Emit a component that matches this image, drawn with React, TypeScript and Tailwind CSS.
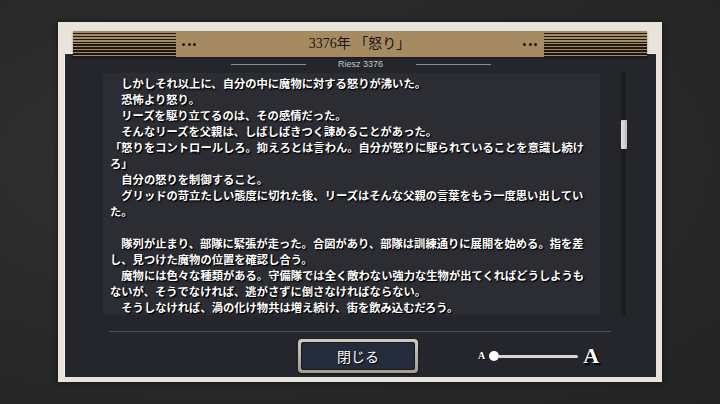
import React from "react";

const lines: string[] = [
  "　しかしそれ以上に、自分の中に魔物に対する怒りが沸いた。",
  "　恐怖より怒り。",
  "　リーズを駆り立てるのは、その感情だった。",
  "　そんなリーズを父親は、しばしばきつく諌めることがあった。",
  "「怒りをコントロールしろ。抑えろとは言わん。自分が怒りに駆られていることを意識し続け",
  "ろ」",
  "　自分の怒りを制御すること。",
  "　グリッドの苛立たしい態度に切れた後、リーズはそんな父親の言葉をもう一度思い出してい",
  "た。",
  "",
  "　隊列が止まり、部隊に緊張が走った。合図があり、部隊は訓練通りに展開を始める。指を差",
  "し、見つけた魔物の位置を確認し合う。",
  "　魔物には色々な種類がある。守備隊では全く敵わない強力な生物が出てくればどうしようも",
  "ないが、そうでなければ、逃がさずに倒さなければならない。",
  "　そうしなければ、渦の化け物共は増え続け、街を飲み込むだろう。",
];

function Stripes() {
  return (
    <div className="w-[103px] h-full bg-[repeating-linear-gradient(to_bottom,#a68b62_0px,#a68b62_1.5px,#1c1813_1.5px,#1c1813_3px)]" />
  );
}

function Dots() {
  return (
    <div className="flex gap-[2.5px] items-center">
      <span className="w-[3px] h-[3px] rounded-full bg-[#1c1813]" />
      <span className="w-[3px] h-[3px] rounded-full bg-[#1c1813]" />
      <span className="w-[3px] h-[3px] rounded-full bg-[#1c1813]" />
    </div>
  );
}

export default function App() {
  return (
    <div className="w-[720px] h-[404px] overflow-hidden bg-[radial-gradient(ellipse_at_30%_40%,#323232_0%,#2a2a2a_45%,#232323_100%)] pt-[22px] pl-[58px]">
      <div className="w-[604px] h-[360px] bg-[#e8e3db] flex flex-col shadow-[0_0_6px_rgba(0,0,0,0.5)]">
        {/* header */}
        <div className="relative z-10 mt-[9px] mx-[15px] h-[26px] bg-[#a68b62] flex items-center shadow-[0_1px_2px_rgba(0,0,0,0.4)]">
          <Stripes />
          <div className="ml-[6px]">
            <Dots />
          </div>
          <div className="flex-1 text-center text-[14px] leading-none text-[#17130d] font-['Liberation_Serif','Noto_Sans_CJK_JP',serif]">
            3376年 「怒り」
          </div>
          <div className="mr-[7px]">
            <Dots />
          </div>
          <Stripes />
        </div>
        {/* dark panel */}
        <div className="mt-[-4px] mx-[6px] mb-[5px] flex-1 bg-[#25262b] border-t border-l border-[#f4f1ec] flex flex-col">
          <div className="h-[17px] pt-[4px] flex items-center justify-center gap-[8px]">
            <div className="w-[75px] h-px bg-[#8b8f94]" />
            <div className="w-[94px] text-center text-[9px] leading-none text-[#c3c7cb] font-['Liberation_Sans','Noto_Sans',sans-serif]">
              Riesz 3376
            </div>
            <div className="w-[75px] h-px bg-[#8b8f94]" />
          </div>
          <div className="flex h-[245px]">
            <div className="ml-[38px] mt-[2px] w-[497px] h-[242px] bg-[#2c2d32] pt-[2px] pl-[7px] overflow-hidden">
              {lines.map((l, i) => (
                <div
                  key={i}
                  className="h-[16px] leading-[16px] whitespace-nowrap text-[11.3px] font-bold text-white font-['Noto_Sans_CJK_JP',sans-serif] [text-shadow:1px_1px_0_#000,1px_1px_2px_#000]"
                >
                  {l || "\u00a0"}
                </div>
              ))}
            </div>
            <div className="ml-[21px] w-[5px] h-[245px] bg-[#1c1d21] pt-[49px]">
              <div className="w-[6px] -ml-[0.5px] h-[29px] rounded-[1px] bg-[linear-gradient(to_right,#e4e4e4,#bdbdbd)]" />
            </div>
          </div>
          <div className="mt-[15px] ml-[44px] w-[502px] h-px bg-[#4b5056]" />
          <div className="mt-[7px] flex items-center h-[34px]">
            <div className="ml-[233px] w-[120px] h-[34px] rounded-[4px] p-[3px] bg-[linear-gradient(to_bottom,#cfcabb,#a39d8c)] shadow-[0_1px_2px_rgba(0,0,0,0.6)]">
              <div className="w-full h-full rounded-[2px] bg-[#242b3a] border border-[#151922] flex items-center justify-center text-[14px] text-white font-['Noto_Sans_CJK_JP',sans-serif] [text-shadow:1px_1px_1px_#000]">
                閉じる
              </div>
            </div>
            <div className="ml-[60px] flex items-center">
              <span className="text-[10px] font-bold text-white leading-none font-['Liberation_Serif',serif] [text-shadow:1px_1px_1px_#000]">
                A
              </span>
              <div className="ml-[4px] w-[10px] h-[10px] rounded-full bg-white" />
              <div className="w-[79px] h-[3px] bg-[#d6d6d6] rounded-r-full" />
              <span className="ml-[5px] text-[22px] font-bold text-white leading-none font-['Liberation_Serif',serif] [text-shadow:1px_1px_0_#000,2px_2px_1px_#000]">
                A
              </span>
            </div>
          </div>
        </div>
      </div>
    </div>
  );
}
